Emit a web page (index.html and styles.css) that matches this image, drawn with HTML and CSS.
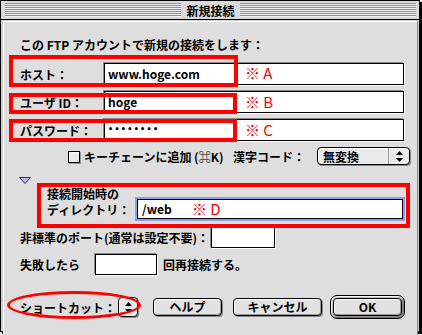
FILE: index.html
```html
<!DOCTYPE html>
<html lang="ja">
<head>
  <meta charset="utf-8">
  <title>新規接続</title>
  <link rel="stylesheet" href="styles.css">
</head>
<body>
  <div class="screen">
    <div class="window">
      <div class="titlebar">
        <div class="stripes"><span class="title">新規接続</span></div>
      </div>
      <div class="panel">
        <p class="intro">この FTP アカウントで新規の接続をします：</p>

        <div class="row">
          <span class="label">ホスト：</span>
          <div class="field wide">www.hoge.com</div>
        </div>
        <div class="row gap">
          <span class="label">ユーザ ID：</span>
          <div class="field wide">hoge</div>
        </div>
        <div class="row gap">
          <span class="label">パスワード：</span>
          <div class="field wide dots">••••••••</div>
        </div>

        <div class="row keychain">
          <span class="checkbox"></span>
          <span class="keychain-label">キーチェーンに追加 (⌘K)</span>
          <span>漢字コード：</span>
          <div class="popup">
            <span class="popup-text">無変換</span>
            <span class="popup-arrows">
              <svg width="7" height="11" viewBox="0 0 7 11"><polygon points="0,4 3.5,0 7,4" fill="#000"/><polygon points="0,7 7,7 3.5,11" fill="#000"/></svg>
            </span>
          </div>
        </div>

        <svg class="disclosure" width="12" height="7" viewBox="0 0 12 7">
          <polygon points="0.5,0.5 11.5,0.5 6,6.5" fill="#c6b8ee" stroke="#333" stroke-width="1"/>
        </svg>

        <div class="row dir">
          <span class="dir-label">接続開始時の<br>ディレクトリ：</span>
          <div class="field focus">/web</div>
        </div>

        <div class="row port">
          <span class="port-label">非標準のポート(通常は設定不要)：</span>
          <div class="field port-field"></div>
        </div>

        <div class="row retry">
          <span class="retry-label">失敗したら</span>
          <div class="field retry-field"></div>
          <span class="retry-after">回再接続する。</span>
        </div>

        <div class="row buttons">
          <span class="shortcut-label">ショートカット：</span>
          <div class="mini-popup">
            <svg width="7" height="11" viewBox="0 0 7 11"><polygon points="0,4 3.5,0 7,4" fill="#000"/><polygon points="0,7 7,7 3.5,11" fill="#000"/></svg>
          </div>
          <button class="btn help">ヘルプ</button>
          <button class="btn cancel">キャンセル</button>
          <div class="default-ring"><button class="btn ok">OK</button></div>
        </div>
      </div>
    </div>

    <!-- annotations drawn over the dialog -->
    <div class="mark mark-host"></div>
    <div class="mark mark-user"></div>
    <div class="mark mark-pass"></div>
    <div class="mark mark-dir"></div>
    <span class="note note-a">※ A</span>
    <span class="note note-b">※ B</span>
    <span class="note note-c">※ C</span>
    <span class="note note-d">※ D</span>
    <div class="ellipse"></div>
  </div>
</body>
</html>
```

FILE: styles.css
```css
body {
  margin: 0;
  background-color: #fff;
  font-family: "Noto Sans CJK JP", "DejaVu Sans", sans-serif;
  font-size: 12px;
  font-weight: bold;
  color: #000;
}

.screen {
  position: relative;
  width: 422px;
  height: 335px;
}

.window {
  width: 420px;
  height: 332px;
  box-sizing: border-box;
  border: 1px solid #000;
  box-shadow: 2px 2px 0 #000;
  background-color: #cfcfcf;
}

.titlebar {
  height: 19px;
  border-bottom: 1px solid #000;
  padding: 2px 3px 0 4px;
  box-sizing: border-box;
  background-color: #dadada;
}

.stripes {
  height: 14px;
  display: flex;
  justify-content: center;
  align-items: center;
  background: repeating-linear-gradient(#8e8e8e 0 1px, #f2f2f2 1px 2px);
}

.title {
  background-color: #dadada;
  padding: 0 5px;
  line-height: 17px;
  font-size: 12px;
}

.panel {
  margin: 1px 1px 0 2px;
  height: 308px;
  border: 1px solid;
  border-color: #fff #8a8a8a #8a8a8a #fff;
  background-color: #dedede;
  padding: 15px 0 0 16px;
}

.intro {
  margin: 0 0 10px 0;
  line-height: 16px;
}

.row {
  display: flex;
  align-items: center;
  height: 22px;
}

.gap {
  margin-top: 6px;
}

.label {
  width: 84px;
}

.field {
  box-sizing: border-box;
  background-color: #fff;
  border: 1px solid #000;
  box-shadow: -1px -1px 0 #8a8a8a, 1px 1px 0 #fff;
  padding: 0 3px;
  line-height: 18px;
}

.wide {
  width: 300px;
  height: 22px;
  line-height: 20px;
}

.dots {
  font-family: "DejaVu Sans", sans-serif;
  font-size: 8px;
  letter-spacing: 1.3px;
}

.keychain {
  margin-top: 6px;
  height: 18px;
}

.checkbox {
  width: 12px;
  height: 12px;
  box-sizing: border-box;
  margin: 2px 4px 0 48px;
  border: 1px solid #000;
  background-color: #ececec;
  box-shadow: inset 1px 1px 0 #fff, 1px 1px 0 #999;
}

.keychain-label {
  width: 149px;
}

.popup {
  margin-left: auto;
  margin-right: 7px;
  width: 93px;
  height: 18px;
  box-sizing: border-box;
  border: 1px solid #000;
  border-radius: 4px;
  background: #eaeaea;
  box-shadow: inset 1px 1px 0 #fff, 1px 1px 0 #8a8a8a;
  display: flex;
  align-items: center;
}

.popup-text {
  flex: 1;
  padding-left: 5px;
}

.popup-arrows {
  width: 20px;
  height: 16px;
  border-left: 1px solid #999;
  display: flex;
  align-items: center;
  justify-content: center;
}

.disclosure {
  display: block;
  margin: 12px 0 2px -1px;
}

.dir {
  height: auto;
  align-items: flex-end;
}

.dir-label {
  margin-left: 27px;
  width: 90px;
  line-height: 16px;
}

.focus {
  width: 266px;
  height: 20px;
  margin-bottom: -1px;
  padding-left: 4px;
  box-shadow: 0 0 0 2px #87a0ef;
}

.port {
  margin-top: 9px;
  height: 21px;
}

.port-label {
  width: 191px;
}

.port-field {
  width: 64px;
  height: 21px;
}

.retry {
  margin-top: 6px;
  height: 21px;
}

.retry-label {
  width: 75px;
}

.retry-field {
  width: 62px;
  height: 21px;
}

.retry-after {
  margin-left: 6px;
}

.buttons {
  margin-top: 20px;
  height: 24px;
}

.shortcut-label {
  width: 98px;
}

.mini-popup {
  width: 20px;
  height: 20px;
  box-sizing: border-box;
  border: 1px solid #000;
  border-radius: 4px;
  background: #eaeaea;
  box-shadow: inset 1px 1px 0 #fff, 1px 1px 0 #8a8a8a;
  display: flex;
  align-items: center;
  justify-content: center;
}

.btn {
  height: 18px;
  box-sizing: border-box;
  border: 1px solid #000;
  border-radius: 4px;
  background-color: #e2e2e2;
  box-shadow: inset 1px 1px 0 #fff, inset -1px -1px 0 #9a9a9a, 1px 1px 0 #8a8a8a;
  font-family: inherit;
  font-size: 12px;
  font-weight: bold;
  padding: 0;
  line-height: 16px;
}

.help {
  width: 69px;
  margin-left: 15px;
}

.cancel {
  width: 89px;
  margin-left: 11px;
}

.default-ring {
  margin-left: 8px;
  width: 75px;
  height: 24px;
  box-sizing: border-box;
  border: 1px solid #000;
  border-radius: 7px;
  background-color: #bdbdbd;
  box-shadow: inset 1px 1px 0 #f4f4f4, inset -1px -1px 0 #777;
  padding: 2px;
}

.ok {
  width: 100%;
}

.mark {
  position: absolute;
  box-sizing: border-box;
  border: 4px solid #f00;
}

.mark-host {
  left: 9px;
  top: 55px;
  width: 229px;
  height: 32px;
}

.mark-user {
  left: 9px;
  top: 93px;
  width: 228px;
  height: 21px;
}

.mark-pass {
  left: 9px;
  top: 119px;
  width: 228px;
  height: 23px;
}

.mark-dir {
  left: 37px;
  top: 183px;
  width: 373px;
  height: 45px;
}

.note {
  position: absolute;
  color: #f00;
  font-size: 15px;
  font-weight: normal;
  line-height: 15px;
  white-space: nowrap;
}

.note-a { left: 245px; top: 65px; }
.note-b { left: 245px; top: 94px; }
.note-c { left: 245px; top: 122px; }
.note-d { left: 192px; top: 201px; }

.ellipse {
  position: absolute;
  left: 7px;
  top: 291px;
  width: 134px;
  height: 28px;
  box-sizing: border-box;
  border: 3px solid #f00;
  border-radius: 50%;
}
```
